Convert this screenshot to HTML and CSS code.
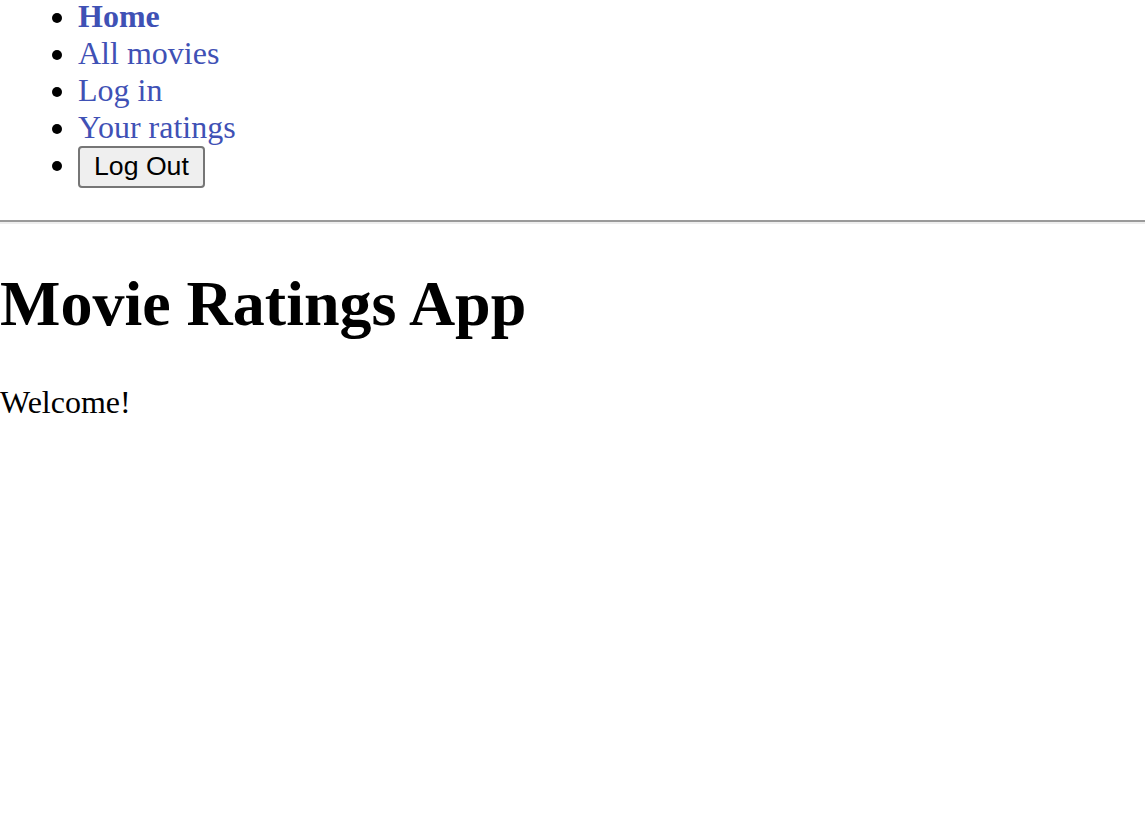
FILE: index.html
```html
<!DOCTYPE html>
<html>
<head>
<meta charset="utf-8">
<link rel="stylesheet" href="styles.css">
</head>
<body>
<nav class="nav">
  <ul class="nav-list">
    <li><a class="nav-link active" href="#">Home</a></li>
    <li><a class="nav-link" href="#">All movies</a></li>
    <li><a class="nav-link" href="#">Log in</a></li>
    <li><a class="nav-link" href="#">Your ratings</a></li>
    <li><button class="logout">Log Out</button></li>
  </ul>
</nav>
<hr class="rule">
<h1 class="title">Movie Ratings App</h1>
<p class="welcome">Welcome!</p>
</body>
</html>
```
FILE: styles.css
```css
html, body {
  margin: 0;
  padding: 0;
  background: #fff;
}
body {
  font-family: "Liberation Serif", "Times New Roman", serif;
  font-size: 32px;
  color: #000;
}
.nav-list {
  margin: -2px 0 32px 0;
  padding-left: 78px;
  list-style: disc;
}
.nav-list li {
  line-height: normal;
}
.nav-link {
  color: #3f51b5;
  text-decoration: none;
}
.nav-link.active {
  font-weight: bold;
}
.logout {
  font-family: "Liberation Sans", Arial, sans-serif;
  font-size: 26.67px;
  padding: 3px 14px 4px;
  margin: 0;
  background: #efefef;
  border: 2px solid #767676;
  border-radius: 4px;
  color: #000;
  vertical-align: baseline;
}
.rule {
  margin: 16px 0;
  height: 0;
  border: none;
  border-top: 2px solid #9a9a9a;
  border-bottom: 2px solid #eeeeee;
}
.title {
  font-size: 64px;
  font-weight: bold;
  margin: 42.88px 0;
}
.welcome {
  margin: 32px 0;
}
```
